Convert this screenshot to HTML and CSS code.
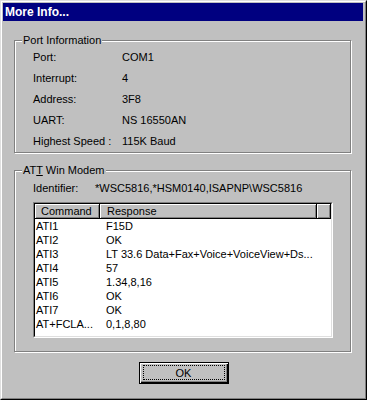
FILE: index.html
```html
<!DOCTYPE html>
<html>
<head>
<meta charset="utf-8">
<link rel="stylesheet" href="styles.css">
</head>
<body>
<div class="window">
  <div class="frame">
    <div class="titlebar">More Info...</div>
    <div class="content">
      <div class="group group-port">
        <span class="legend">Port Information</span>
        <div class="row"><span class="label">Port:</span><span>COM1</span></div>
        <div class="row"><span class="label">Interrupt:</span><span>4</span></div>
        <div class="row"><span class="label">Address:</span><span>3F8</span></div>
        <div class="row"><span class="label">UART:</span><span>NS 16550AN</span></div>
        <div class="row"><span class="label">Highest Speed :</span><span>115K Baud</span></div>
      </div>
      <div class="group group-modem">
        <span class="legend">AT<u>T</u> Win Modem</span>
        <div class="ident"><span class="ident-label">Identifier:</span><span>*WSC5816,*HSM0140,ISAPNP\WSC5816</span></div>
        <div class="listview">
          <div class="lv-inner">
            <div class="lv-head">
              <div class="hcell hc-cmd">Command</div>
              <div class="hcell hc-resp">Response</div>
              <div class="hcell hc-fill"></div>
            </div>
            <div class="lv-row"><span class="c-cmd">ATI1</span><span class="c-resp">F15D</span></div>
            <div class="lv-row"><span class="c-cmd">ATI2</span><span class="c-resp">OK</span></div>
            <div class="lv-row"><span class="c-cmd">ATI3</span><span class="c-resp">LT 33.6 Data+Fax+Voice+VoiceView+Ds...</span></div>
            <div class="lv-row"><span class="c-cmd">ATI4</span><span class="c-resp">57</span></div>
            <div class="lv-row"><span class="c-cmd">ATI5</span><span class="c-resp">1.34,8,16</span></div>
            <div class="lv-row"><span class="c-cmd">ATI6</span><span class="c-resp">OK</span></div>
            <div class="lv-row"><span class="c-cmd">ATI7</span><span class="c-resp">OK</span></div>
            <div class="lv-row"><span class="c-cmd">AT+FCLA...</span><span class="c-resp">0,1,8,80</span></div>
          </div>
        </div>
      </div>
      <div class="actions">
        <button class="btn"><span class="focus">OK</span></button>
      </div>
    </div>
  </div>
</div>
</body>
</html>
```

FILE: styles.css
```css
* { box-sizing: border-box; }
html, body { margin: 0; padding: 0; background: #c0c0c0; }
body {
  font-family: "Liberation Sans", Arial, sans-serif;
  font-size: 11px;
  color: #000;
}
.window {
  width: 367px;
  height: 400px;
  border: 1px solid;
  border-color: #dfdfdf #000 #000 #dfdfdf;
  background: #c0c0c0;
}
.frame {
  height: 100%;
  border: 1px solid;
  border-color: #fff #808080 #808080 #fff;
  padding: 1px;
  display: flex;
  flex-direction: column;
}
.titlebar {
  height: 18px;
  line-height: 18px;
  background: #000080;
  color: #fff;
  font-weight: bold;
  font-size: 12px;
  padding-left: 2px;
  margin-right: 1px;
}
.content {
  display: flex;
  flex-direction: column;
  padding: 19px 0 0 11px;
}
.group {
  position: relative;
  width: 337px;
  border: 1px solid #808080;
  box-shadow: inset 1px 1px 0 #fff, 1px 1px 0 #fff;
  padding-left: 18px;
}
.legend {
  position: absolute;
  top: -7px;
  left: 7px;
  line-height: 13px;
  padding: 0 1px;
  background: #c0c0c0;
}
.group-port {
  height: 113px;
  padding-top: 6px;
}
.row {
  display: flex;
  height: 21px;
  line-height: 21px;
}
.label { width: 89px; }
.group-modem {
  margin-top: 17px;
  height: 182px;
  padding-top: 9px;
}
.ident {
  display: flex;
  height: 16px;
  line-height: 16px;
}
.ident-label { width: 62px; }
.listview {
  margin-top: 6px;
  width: 300px;
  height: 136px;
  border: 1px solid;
  border-color: #808080 #fff #fff #808080;
}
.lv-inner {
  height: 100%;
  border: 1px solid;
  border-color: #000 #dfdfdf #dfdfdf #000;
  background: #fff;
}
.lv-head {
  display: flex;
  height: 15px;
}
.hcell {
  height: 15px;
  line-height: 14px;
  background: #c0c0c0;
  box-shadow: inset -1px -1px 0 #000, inset 1px 1px 0 #fff, inset -2px -2px 0 #808080;
}
.hc-cmd { width: 65px; padding-left: 6px; }
.hc-resp { width: 217px; padding-left: 7px; }
.hc-fill { flex: 1; }
.lv-row {
  display: flex;
  height: 14px;
  line-height: 14px;
  white-space: nowrap;
}
.c-cmd { width: 65px; padding-left: 1px; }
.c-resp { padding-left: 6px; }
.actions {
  display: flex;
  justify-content: center;
  margin-top: 10px;
  padding-right: 11px;
}
.btn {
  width: 90px;
  height: 22px;
  margin: 0;
  padding: 2px 3px 3px 3px;
  border: 1px solid #000;
  background: #c0c0c0;
  box-shadow: inset 1px 1px 0 #fff, inset -1px -1px 0 #000, inset -2px -2px 0 #808080;
  font-family: "Liberation Sans", Arial, sans-serif;
  font-size: 11px;
  color: #000;
  display: flex;
}
.focus {
  flex: 1;
  border: 1px dotted #000;
  line-height: 14px;
  text-align: center;
}
```
